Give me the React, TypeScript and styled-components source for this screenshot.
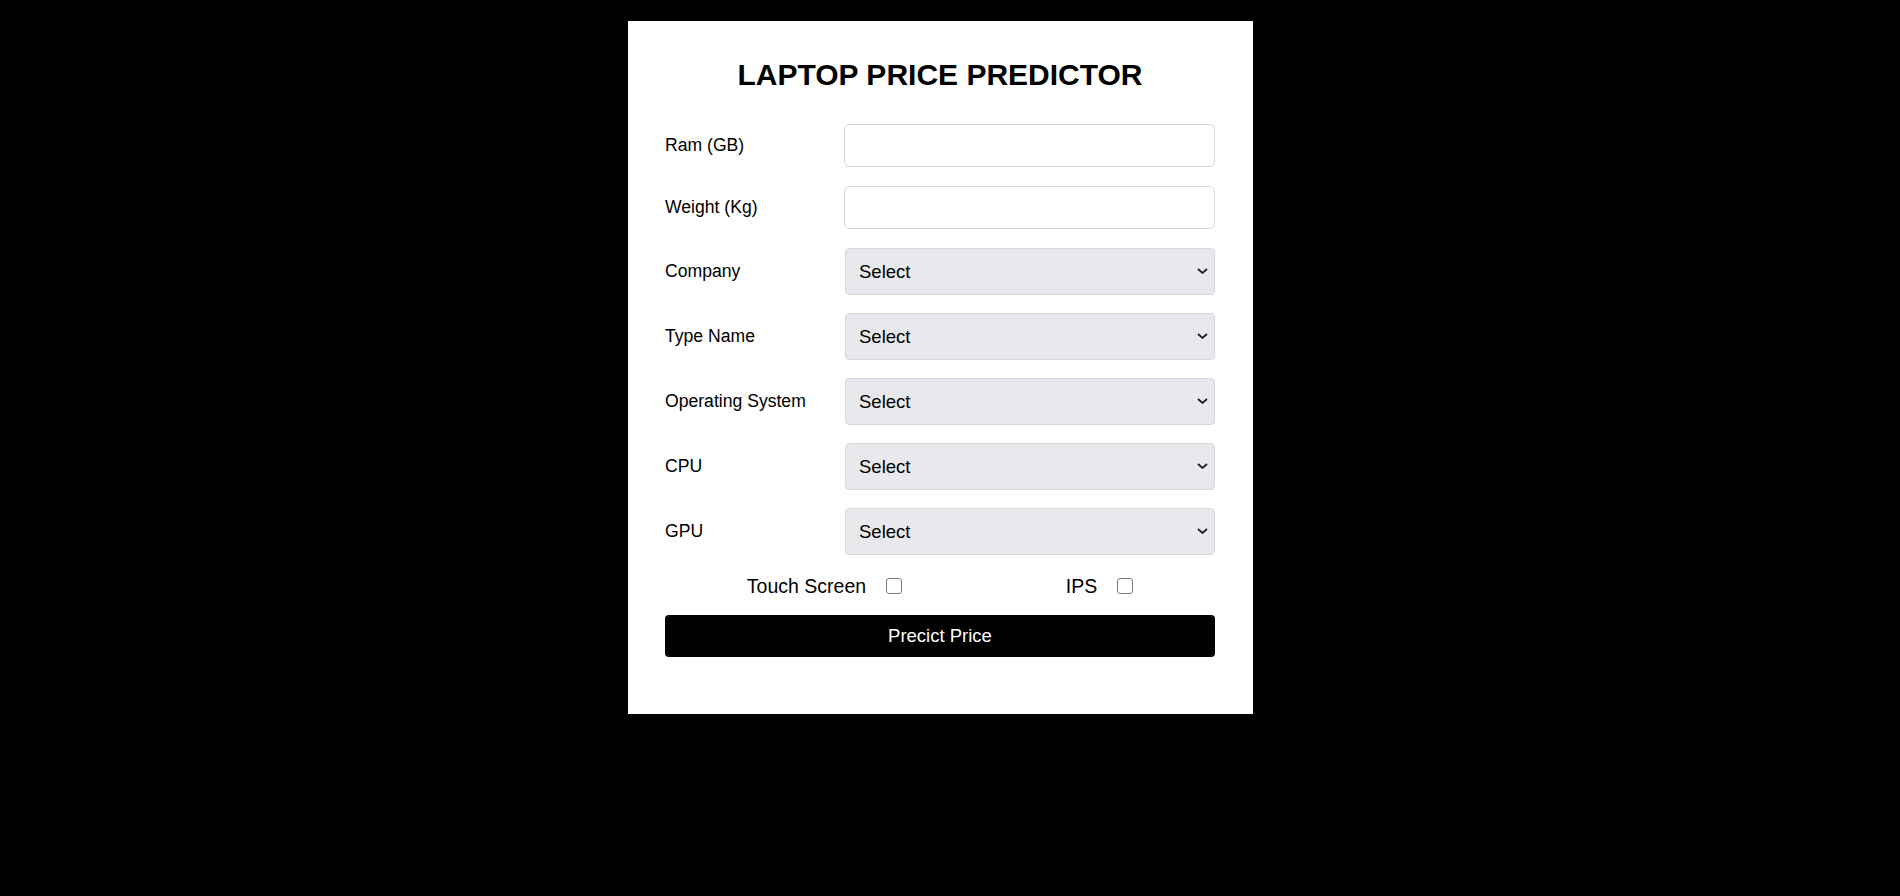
import styled, { createGlobalStyle } from 'styled-components';

const GlobalStyle = createGlobalStyle`
  html, body {
    margin: 0;
    padding: 0;
    background: #000;
    font-family: "Liberation Sans", Arial, sans-serif;
  }
  * {
    box-sizing: border-box;
  }
`;

const fields = [
  { label: 'Ram (GB)', kind: 'input' },
  { label: 'Weight (Kg)', kind: 'input' },
  { label: 'Company', kind: 'select' },
  { label: 'Type Name', kind: 'select' },
  { label: 'Operating System', kind: 'select' },
  { label: 'CPU', kind: 'select' },
  { label: 'GPU', kind: 'select' },
];

export default function App() {
  return (
    <>
      <GlobalStyle />
      <Page>
        <Card>
          <Title>LAPTOP PRICE PREDICTOR</Title>
          <Form onSubmit={(e) => e.preventDefault()}>
            {fields.map((f) => (
              <Row key={f.label} $select={f.kind === 'select'}>
                <Label>{f.label}</Label>
                {f.kind === 'input' ? (
                  <TextInput type="text" />
                ) : (
                  <SelectWrap>
                    <Select defaultValue="">
                      <option value="">Select</option>
                    </Select>
                    <Chevron width="11" height="6" viewBox="0 0 11 6">
                      <path d="M1 1 L5.5 5 L10 1" fill="none" stroke="#1a1a1a" strokeWidth="1.7" />
                    </Chevron>
                  </SelectWrap>
                )}
              </Row>
            ))}
            <CheckRow>
              <CheckItem>
                Touch Screen
                <Check type="checkbox" />
              </CheckItem>
              <CheckItem>
                IPS
                <Check type="checkbox" />
              </CheckItem>
            </CheckRow>
            <Button type="submit">Precict Price</Button>
          </Form>
        </Card>
      </Page>
    </>
  );
}

const Page = styled.div`
  min-height: 896px;
  display: flex;
  justify-content: center;
  align-items: flex-start;
  padding: 21px 19px 0 0;
`;

const Card = styled.div`
  width: 625px;
  background: #fff;
  padding: 36px 38px 57px 37px;
`;

const Title = styled.h1`
  margin: 0 0 31px;
  font-size: 30px;
  line-height: 36px;
  font-weight: 700;
  text-align: center;
  color: #000;
`;

const Form = styled.form`
  display: flex;
  flex-direction: column;
  gap: 18px;
`;

const Row = styled.div<{ $select?: boolean }>`
  display: grid;
  grid-template-columns: ${(p) => (p.$select ? '180px' : '179px')} 1fr;
  align-items: center;
  height: ${(p) => (p.$select ? '47px' : '43px')};
  margin-bottom: ${(p) => (p.$select ? '0' : '1px')};
`;

const Label = styled.label`
  font-size: 17.6px;
  color: #000;
`;

const TextInput = styled.input`
  height: 43px;
  width: 100%;
  border: 1px solid #d6d8da;
  border-radius: 5px;
  background: #fff;
  padding: 0 12px;
  font-size: 18px;
  font-family: inherit;
  outline: none;
`;

const SelectWrap = styled.div`
  position: relative;
  height: 47px;
`;

const Select = styled.select`
  appearance: none;
  width: 100%;
  height: 47px;
  border: 1px solid #d8d8dc;
  border-radius: 4px;
  background: #e9e9ed;
  padding: 0 30px 0 13px;
  font-size: 18.5px;
  font-family: inherit;
  color: #000;
  outline: none;
`;

const Chevron = styled.svg`
  position: absolute;
  right: 7px;
  top: 20px;
  pointer-events: none;
`;

const CheckRow = styled.div`
  display: flex;
  justify-content: space-around;
  align-items: center;
  height: 22px;
  margin-top: 2px;
`;

const CheckItem = styled.label`
  display: flex;
  align-items: center;
  gap: 20px;
  font-size: 19.5px;
  color: #000;
`;

const Check = styled.input`
  appearance: none;
  margin: 0;
  width: 16px;
  height: 16px;
  border: 1.5px solid #7b7b80;
  border-radius: 3px;
  background: #fff;
`;

const Button = styled.button`
  height: 42px;
  width: 100%;
  border: none;
  border-radius: 4px;
  background: #000;
  color: #fff;
  font-size: 18.5px;
  font-family: inherit;
  cursor: pointer;
`;
